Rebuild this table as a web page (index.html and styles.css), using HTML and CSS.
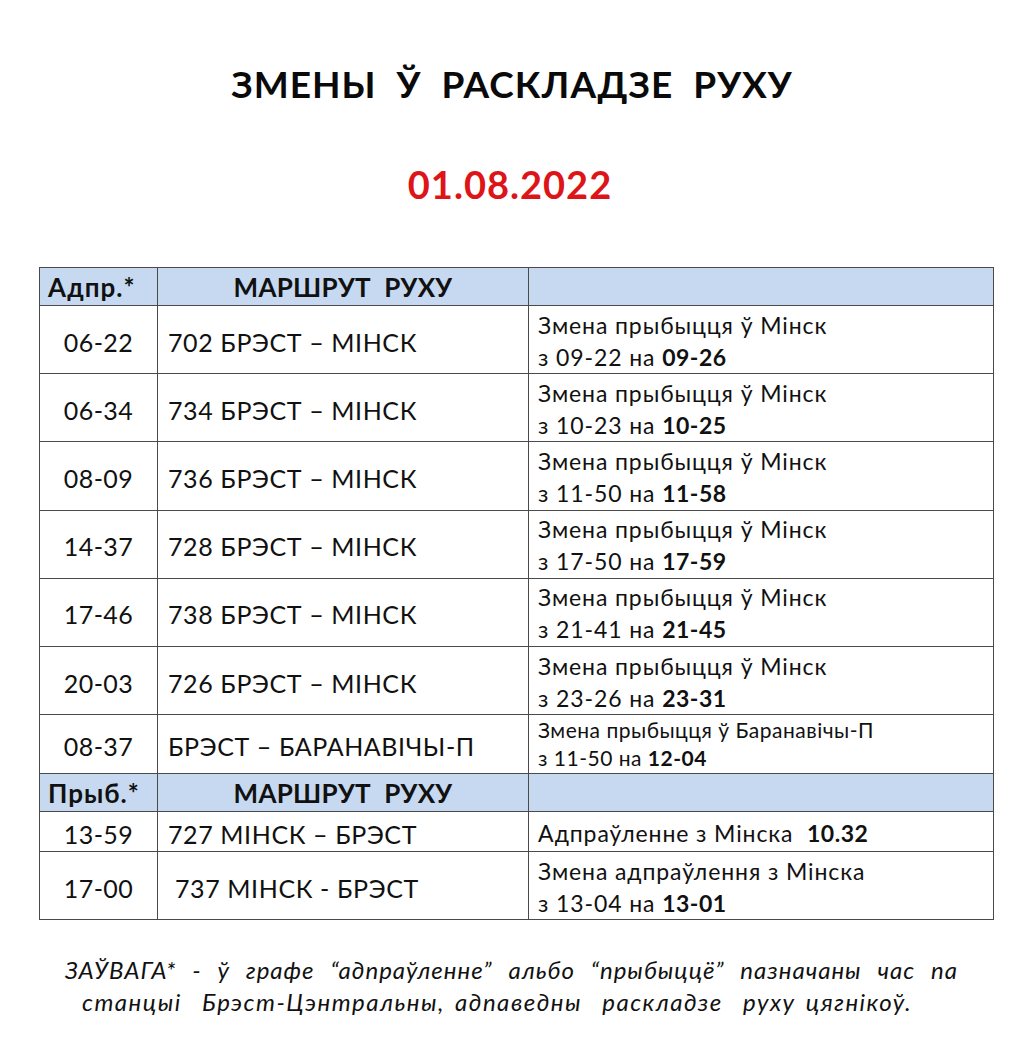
FILE: index.html
```html
<!DOCTYPE html>
<html lang="be">
<head>
<meta charset="utf-8">
<title>Змены ў раскладзе руху</title>
<link rel="stylesheet" href="styles.css">
</head>
<body>
<h1 class="title">ЗМЕНЫ&nbsp; Ў&nbsp; РАСКЛАДЗЕ&nbsp; РУХУ</h1>
<p class="date">01.08.2022</p>
<table class="sched">
  <colgroup><col class="c1"><col class="c2"><col class="c3"></colgroup>
  <tr class="head"><th class="hl">Адпр.*</th><th>МАРШРУТ&nbsp; РУХУ</th><th></th></tr>
  <tr class="row"><td class="t">06-22</td><td class="r">702 БРЭСТ – МІНСК</td><td class="n">Змена прыбыцця ў Мінск<br>з 09-22 на <b>09-26</b></td></tr>
  <tr class="row"><td class="t">06-34</td><td class="r">734 БРЭСТ – МІНСК</td><td class="n">Змена прыбыцця ў Мінск<br>з 10-23 на <b>10-25</b></td></tr>
  <tr class="row"><td class="t">08-09</td><td class="r">736 БРЭСТ – МІНСК</td><td class="n">Змена прыбыцця ў Мінск<br>з 11-50 на <b>11-58</b></td></tr>
  <tr class="row"><td class="t">14-37</td><td class="r">728 БРЭСТ – МІНСК</td><td class="n">Змена прыбыцця ў Мінск<br>з 17-50 на <b>17-59</b></td></tr>
  <tr class="row"><td class="t">17-46</td><td class="r">738 БРЭСТ – МІНСК</td><td class="n">Змена прыбыцця ў Мінск<br>з 21-41 на <b>21-45</b></td></tr>
  <tr class="row"><td class="t">20-03</td><td class="r">726 БРЭСТ – МІНСК</td><td class="n">Змена прыбыцця ў Мінск<br>з 23-26 на <b>23-31</b></td></tr>
  <tr class="row-s"><td class="t">08-37</td><td class="r">БРЭСТ – БАРАНАВІЧЫ-П</td><td class="n small">Змена прыбыцця ў Баранавічы-П<br>з 11-50 на <b>12-04</b></td></tr>
  <tr class="head2"><th class="hl">Прыб.*</th><th>МАРШРУТ&nbsp; РУХУ</th><th></th></tr>
  <tr class="row-1"><td class="t">13-59</td><td class="r">727 МІНСК – БРЭСТ</td><td class="n">Адпраўленне з Мінска&nbsp; <b>10.32</b></td></tr>
  <tr class="row"><td class="t">17-00</td><td class="r">&nbsp;737 МІНСК - БРЭСТ</td><td class="n">Змена адпраўлення з Мінска<br>з 13-04 на <b>13-01</b></td></tr>
</table>
<div class="note">
  <p class="note-l1">ЗАЎВАГА* - ў графе “адпраўленне” альбо “прыбыццё” пазначаны час па</p>
  <p class="note-l2">станцыі&nbsp; Брэст-Цэнтральны, адпаведны&nbsp; раскладзе&nbsp; руху цягнікоў.</p>
</div>
</body>
</html>
```
FILE: styles.css
```css
html, body {
  margin: 0;
  padding: 0;
  background: #ffffff;
}
body {
  font-family: Lato, "Open Sans", "Noto Sans", sans-serif;
  color: #111111;
  padding-top: 62px;
}
.title {
  margin: 0;
  font-size: 37px;
  line-height: 44px;
  font-weight: 700;
  text-align: center;
  color: #0a0a0a;
  letter-spacing: 1px;
}
.date {
  margin: 55px 0 0;
  font-size: 38px;
  line-height: 46px;
  font-weight: 700;
  text-align: center;
  color: #dd1418;
  letter-spacing: 1px;
  padding-right: 4px;
}
.sched {
  margin: 60px 0 0 39px;
  border-collapse: collapse;
  table-layout: fixed;
  width: 954px;
}
.c1 { width: 118px; }
.c2 { width: 371px; }
.c3 { width: 465px; }
.sched th, .sched td {
  border: 1.5px solid #4a4a4a;
  padding: 0;
}
.head th, .head2 th {
  background: #c6d9f0;
  font-weight: 700;
  font-size: 26px;
  text-align: center;
  color: #111;
  letter-spacing: 0.3px;
}
.head th.hl, .head2 th.hl {
  text-align: left;
  padding-left: 8px;
  letter-spacing: 1px;
}
.head { height: 38px; }
.head2 { height: 38px; }
.row { height: 68.2px; }
.row-s { height: 59px; }
.row-1 { height: 40px; }
.t {
  text-align: center;
  font-size: 25px;
  letter-spacing: 0.4px;
  padding-top: 4px !important;
}
.r {
  font-size: 25px;
  letter-spacing: 0.6px;
  padding-left: 10px !important;
  padding-top: 4px !important;
}
.n {
  font-size: 23px;
  line-height: 32px;
  letter-spacing: 0.9px;
  padding-left: 9px !important;
  padding-top: 2px !important;
}
.n.small {
  font-size: 21px;
  line-height: 28px;
  letter-spacing: 0.5px;
  padding-top: 0 !important;
}
.n b { font-weight: 700; letter-spacing: 0.5px; }
.note {
  margin-top: 34px;
  font-style: italic;
  font-size: 24px;
  line-height: 32px;
  color: #111;
  letter-spacing: 1px;
}
.note p { margin: 0; }
.note-l1 {
  margin-left: 65px !important;
  width: 893px;
  text-align: justify;
  text-align-last: justify;
}
.note-l2 {
  text-align: center;
  padding-right: 30px;
  letter-spacing: 1.5px;
  word-spacing: 3px;
}
```
